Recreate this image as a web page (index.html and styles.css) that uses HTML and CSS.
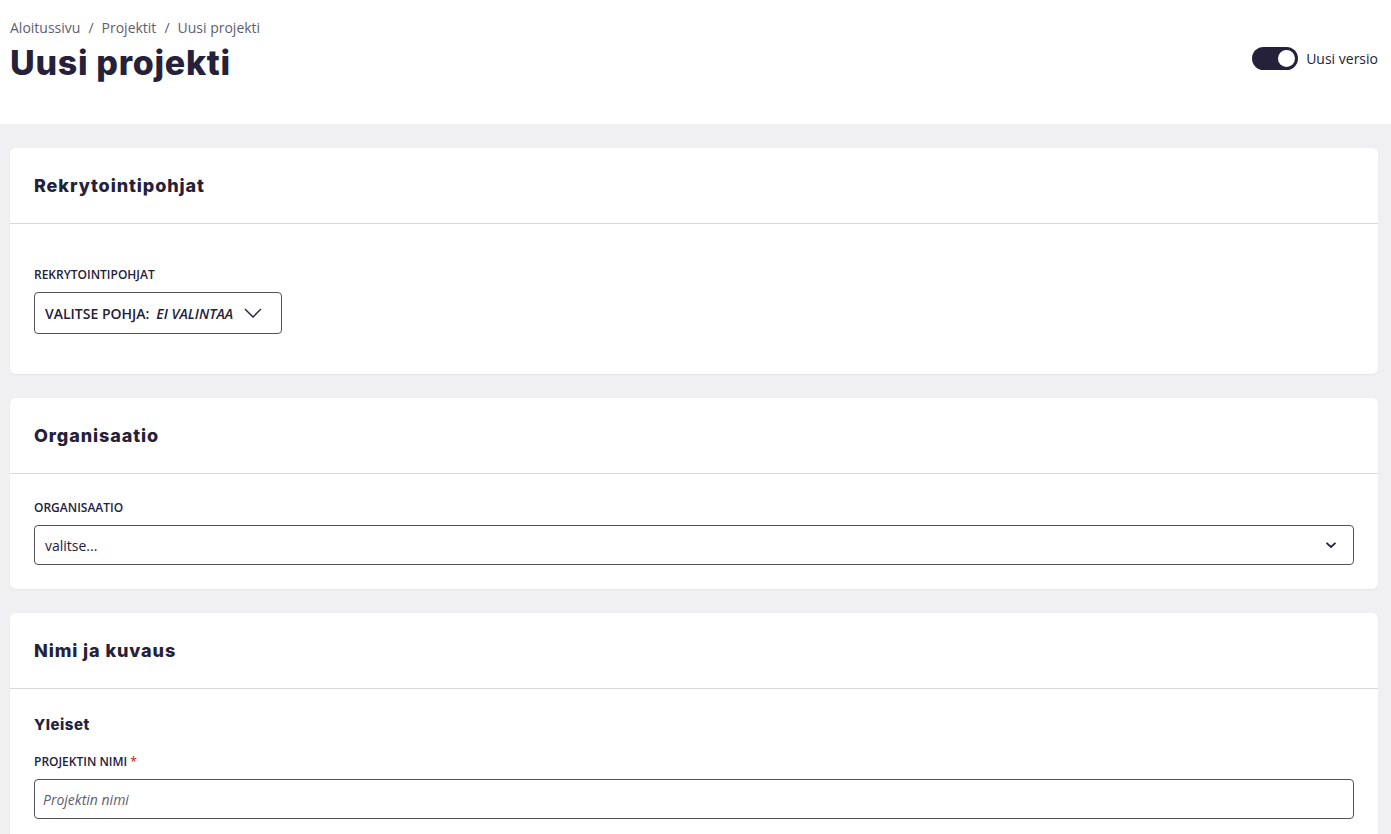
FILE: index.html
```html
<!DOCTYPE html>
<html lang="fi">
<head>
    <meta charset="UTF-8">
    <meta name="viewport" content="width=device-width, initial-scale=1.0">
    <title>Uusi projekti</title>
    <link rel="stylesheet" href="styles.css">
</head>
<body>

    <header class="page-header">
        <div>
            <nav class="breadcrumb">
                <a href="#">Aloitussivu</a><span class="sep">/</span><a href="#">Projektit</a><span class="sep">/</span><span>Uusi projekti</span>
            </nav>
            <h1>Uusi projekti</h1>
        </div>
        <label class="switch">
            <span class="track"><span class="knob"></span></span>
            Uusi versio
        </label>
    </header>

    <main class="content">
        <section class="card">
            <div class="card-head"><h2>Rekrytointipohjat</h2></div>
            <div class="card-body card-body-tall">
                <div class="field-label">Rekrytointipohjat</div>
                <button class="template-select" type="button">
                    <span>VALITSE POHJA:</span> <em>EI VALINTAA</em>
                    <svg width="18" height="10" viewBox="0 0 18 10"><path d="M1 1l8 8 8-8" fill="none" stroke="#25213b" stroke-width="1.4"/></svg>
                </button>
            </div>
        </section>

        <section class="card">
            <div class="card-head"><h2>Organisaatio</h2></div>
            <div class="card-body">
                <div class="field-label">Organisaatio</div>
                <div class="select">
                    <span>valitse...</span>
                    <svg width="12" height="8" viewBox="0 0 12 8"><path d="M1.5 1.8l4.5 4.2 4.5-4.2" fill="none" stroke="#25213b" stroke-width="1.8"/></svg>
                </div>
            </div>
        </section>

        <section class="card">
            <div class="card-head"><h2>Nimi ja kuvaus</h2></div>
            <div class="card-body">
                <h3>Yleiset</h3>
                <div class="field-label">Projektin nimi <span class="req">*</span></div>
                <input class="text-input" type="text" placeholder="Projektin nimi">
            </div>
        </section>
    </main>

</body>
</html>
```

FILE: styles.css
```css
* {
  margin: 0;
  padding: 0;
  box-sizing: border-box;
}

body {
  font-family: "Open Sans", "Noto Sans", sans-serif;
  color: #25213b;
  background: #f0f0f2;
  min-height: 100vh;
}

.page-header {
  background: #fff;
  height: 124px;
  padding: 18px 13px 0 10px;
  display: flex;
  justify-content: space-between;
  align-items: flex-start;
}

.breadcrumb {
  font-size: 14px;
  color: #5f5d6e;
  line-height: 20px;
}

.breadcrumb a {
  color: #5f5d6e;
  text-decoration: none;
}

.breadcrumb .sep {
  margin: 0 8px;
}

h1 {
  font-family: Inter, "Noto Sans", sans-serif;
  font-size: 34px;
  font-weight: 800;
  letter-spacing: 0.7px;
  line-height: 42px;
  margin-top: 4px;
}

.switch {
  display: flex;
  align-items: center;
  gap: 8px;
  font-size: 14px;
  margin-top: 29px;
}

.track {
  width: 46px;
  height: 23px;
  border-radius: 12px;
  background: #25213b;
  display: flex;
  align-items: center;
  justify-content: flex-end;
  padding-right: 3px;
}

.knob {
  width: 17px;
  height: 17px;
  border-radius: 50%;
  background: #fff;
}

.content {
  padding: 24px 13px 24px 10px;
  display: flex;
  flex-direction: column;
  gap: 24px;
}

.card {
  background: #fff;
  border-radius: 6px;
  box-shadow: 0 1px 2px rgba(0, 0, 0, .05);
}

.card-head {
  height: 76px;
  padding: 0 24px;
  display: flex;
  align-items: center;
  border-bottom: 1px solid #d9d9dd;
}

h2 {
  font-family: Inter, "Noto Sans", sans-serif;
  font-size: 18px;
  font-weight: 800;
  letter-spacing: 0.9px;
}

.card-body {
  padding: 26px 24px 24px;
}

.card-body-tall {
  padding: 43px 24px 40px;
}

h3 {
  font-family: Inter, "Noto Sans", sans-serif;
  font-size: 15px;
  font-weight: 800;
  letter-spacing: 0.5px;
  margin-bottom: 20px;
}

.field-label {
  font-size: 12px;
  font-weight: 600;
  text-transform: uppercase;
  line-height: 16px;
  margin-bottom: 9px;
}

.req {
  color: #c0392b;
}

.template-select {
  height: 42px;
  padding: 0 19px 0 10px;
  border: 1px solid #54525f;
  border-radius: 4px;
  background: #fff;
  font-family: "Open Sans", "Noto Sans", sans-serif;
  font-size: 14px;
  font-weight: 600;
  color: #25213b;
  display: flex;
  align-items: center;
  gap: 4px;
}

.template-select em {
  font-weight: 600;
  margin-left: 3px;
  margin-right: 7px;
}

.select {
  height: 40px;
  border: 1px solid #54525f;
  border-radius: 4px;
  padding: 0 16px 0 10px;
  display: flex;
  align-items: center;
  justify-content: space-between;
  font-size: 14px;
}

.text-input {
  width: 100%;
  height: 40px;
  border: 1px solid #54525f;
  border-radius: 4px;
  padding: 0 8px;
  font-family: "Open Sans", "Noto Sans", sans-serif;
  font-size: 14px;
  color: #25213b;
}

.text-input::placeholder {
  font-style: italic;
  color: #5f5d6e;
}
```
